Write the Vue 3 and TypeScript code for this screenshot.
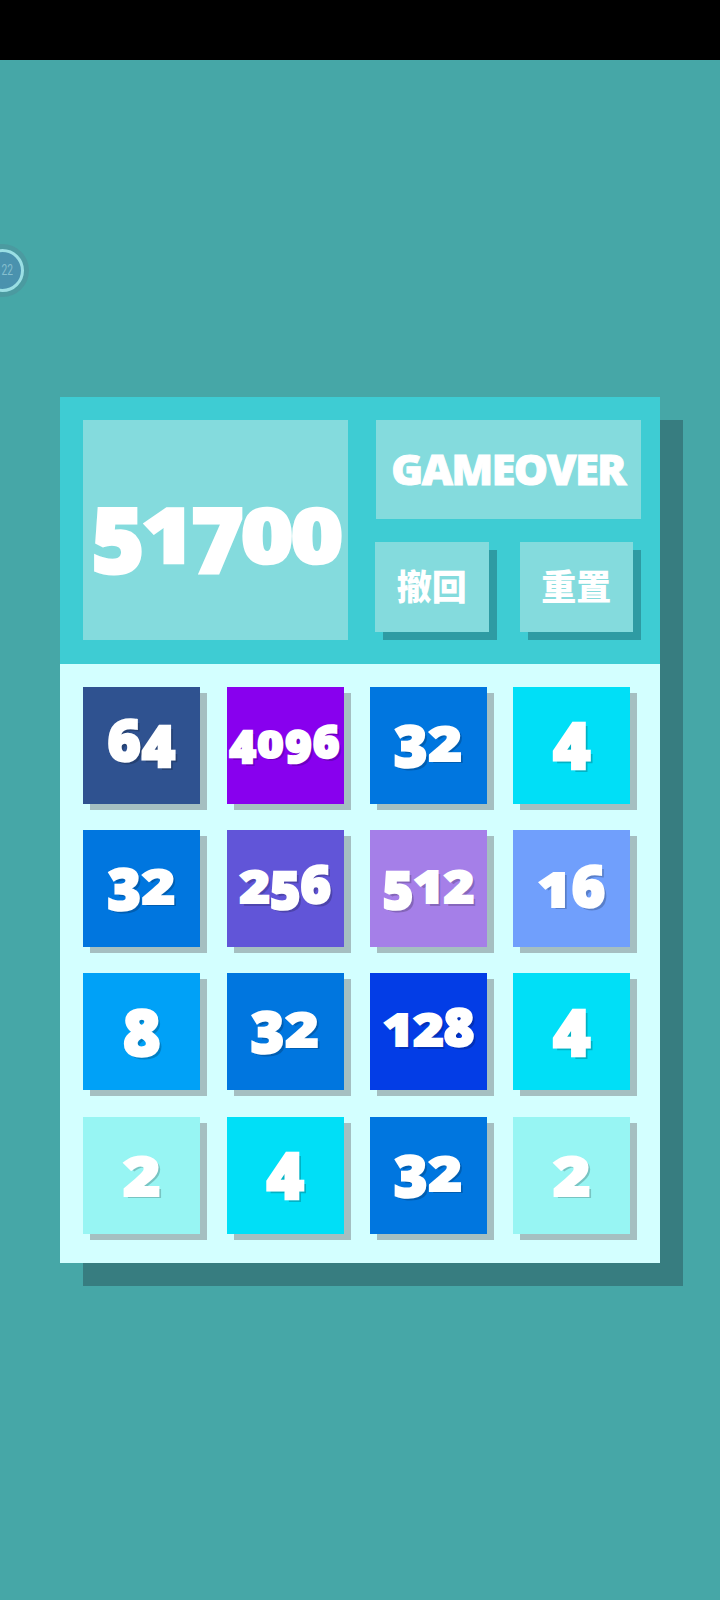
<script setup lang="ts">
interface Tile {
  value: number
  color: string
  digits: string[]
}

const colors: Record<number, string> = {
  2: '#97f5f3',
  4: '#00dff7',
  8: '#00a1f7',
  16: '#709ffc',
  32: '#0076df',
  64: '#2f5290',
  128: '#033de6',
  256: '#6155d8',
  512: '#a57fe8',
  4096: '#8800ee'
}

const values: number[] = [64, 4096, 32, 4, 32, 256, 512, 16, 8, 32, 128, 4, 2, 4, 32, 2]
const tiles: Tile[] = values.map((value) => ({
  value,
  color: colors[value],
  digits: String(value).split('')
}))
const scoreDigits: string[] = '51700'.split('')

function sizeClass(tile: Tile): string {
  return `len-${tile.digits.length} val-${tile.value}`
}
</script>

<template>
  <div class="page">
    <div class="status-bar"></div>
    <div class="float-ball"><span class="float-text">22</span></div>
    <main class="board">
      <header class="panel">
        <div class="score">
          <span v-for="(d, i) in scoreDigits" :key="i" class="digit" :class="'d' + d">{{ d }}</span>
        </div>
        <div class="side">
          <div class="state">GAMEOVER</div>
          <div class="actions">
            <button class="action" type="button">撤回</button>
            <button class="action" type="button">重置</button>
          </div>
        </div>
      </header>
      <section class="grid">
        <div
          v-for="(tile, i) in tiles"
          :key="i"
          class="tile"
          :class="sizeClass(tile)"
          :style="{ backgroundColor: tile.color }"
        >
          <span v-for="(d, j) in tile.digits" :key="j" class="digit" :class="'d' + d">{{ d }}</span>
        </div>
      </section>
    </main>
  </div>
</template>

<style>
html,
body {
  margin: 0;
  background: #46a7a7;
}
</style>

<style scoped>
.page {
  position: relative;
  width: 720px;
  height: 1600px;
  overflow: hidden;
  background: #46a7a7;
}

.status-bar {
  height: 60px;
  background: #000;
}

.float-ball {
  position: absolute;
  left: -19.5px;
  top: 249px;
  width: 37px;
  height: 37px;
  display: flex;
  align-items: center;
  justify-content: flex-end;
  border: 3px solid #9adfe4;
  border-radius: 50%;
  background: #4a92ae;
  box-shadow: 0 0 0 5px #4b9aa0;
}

.float-text {
  margin-right: 8px;
  font-family: "Roboto", sans-serif;
  font-size: 15px;
  line-height: 1;
  color: #85bfce;
  transform: scaleX(0.68);
  transform-origin: 100% 50%;
}

.board {
  width: 600px;
  margin: 337px 0 0 60px;
  background: #d3ffff;
  box-shadow: 23px 23px 0 #377d80;
}

.panel {
  display: flex;
  gap: 27.5px;
  height: 266.5px;
  box-sizing: border-box;
  padding: 23.3px 19.5px 23px 23.3px;
  background: #3eccd3;
}

.score {
  width: 265px;
  height: 220px;
  display: flex;
  align-items: center;
  justify-content: center;
  padding-top: 16px;
  box-sizing: border-box;
  background: #84dbdd;
  font-family: "Open Sans", sans-serif;
  font-weight: 800;
  font-size: 90px;
  line-height: 1;
  letter-spacing: -3px;
  color: #fff;
  -webkit-text-stroke: 3px #fff;
}

.digit {
  display: inline-block;
  transform-origin: 50% 0.174em;
}

.d0,
.d1,
.d2 {
  transform: scaleY(0.84);
}

.d6,
.d8 {
  transform: translateY(-0.114em);
}

.side {
  flex: 1;
  display: flex;
  flex-direction: column;
  gap: 23px;
}

.state {
  height: 99px;
  display: flex;
  align-items: center;
  justify-content: center;
  padding-bottom: 3px;
  box-sizing: border-box;
  background: #84dbdd;
  font-family: "Open Sans", sans-serif;
  font-weight: 800;
  font-size: 43px;
  line-height: 1;
  letter-spacing: -1.4px;
  color: #fff;
  -webkit-text-stroke: 1px #fff;
}

.actions {
  display: flex;
  gap: 31px;
  margin-left: -0.8px;
}

.action {
  width: 113.5px;
  height: 90px;
  padding: 0 0 5px;
  border: 0;
  border-radius: 0;
  background: #84dbdd;
  box-shadow: 8px 8px 0 #2e9ba3;
  font-family: "Noto Sans CJK SC", sans-serif;
  font-weight: 900;
  font-size: 35px;
  line-height: 1;
  color: #fff;
}

.grid {
  display: grid;
  grid-template-columns: repeat(4, 117px);
  grid-auto-rows: 117px;
  gap: 26.33px;
  padding: 23.2px 30px 29.8px 23.33px;
}

.tile {
  display: flex;
  align-items: center;
  justify-content: center;
  box-shadow: 7px 6px 0 #a5bfc1;
  font-family: "Open Sans", sans-serif;
  font-weight: 800;
  line-height: 1;
  color: #fff;
  -webkit-text-stroke: 2.5px #fff;
  text-shadow: 3px 3px 0 rgba(0, 0, 0, 0.2);
}

.len-1 {
  font-size: 64px;
}

.len-1 .digit {
  transform: none;
  transform-origin: 50% 50%;
}

.len-1 .d2 {
  transform: scaleY(0.87);
}

.len-2 {
  font-size: 57px;
  letter-spacing: 1px;
}

.len-3 {
  font-size: 52px;
}

.len-4 {
  font-size: 45px;
  letter-spacing: 1.5px;
}

.val-16 {
  padding-top: 6px;
  box-sizing: border-box;
}
</style>
